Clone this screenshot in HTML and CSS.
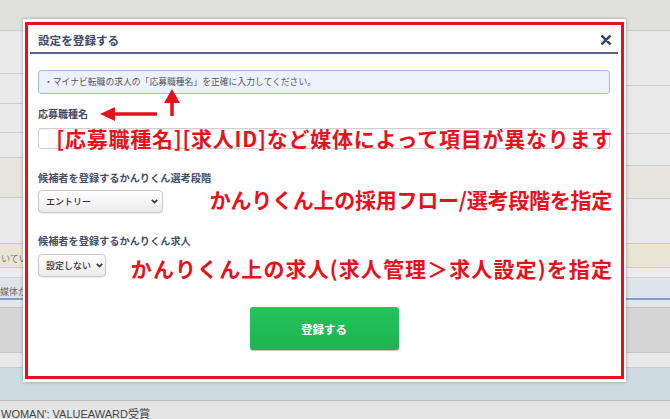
FILE: index.html
```html
<!DOCTYPE html>
<html lang="ja">
<head>
<meta charset="utf-8">
<title>設定を登録する</title>
<link rel="stylesheet" href="styles.css">
</head>
<body>
<div class="page">
  <div class="bg-top">
    <div class="col col-left">
      <div class="row r-top h30"></div>
      <div class="row h43"></div>
      <div class="row h30"></div>
      <div class="row h29"></div>
      <div class="row h25"></div>
      <div class="row beige h40"></div>
      <div class="row h46"></div>
    </div>
    <div class="col col-mid">
      <div class="row r-top h30"></div>
      <div class="row h213"></div>
    </div>
    <div class="col col-right">
      <div class="row r-top h30"></div>
      <div class="row h55"></div>
      <div class="row h48"></div>
      <div class="row h32"></div>
      <div class="row beige h33"></div>
      <div class="row h45"></div>
    </div>
  </div>
  <div class="band band-yellow"><span class="bg-text">いてい</span></div>
  <div class="band band-gap"></div>
  <div class="band band-blue"><span class="bg-text dim">媒体か</span></div>
  <div class="band band-light"></div>
  <div class="band band-gray"></div>
  <div class="band band-pale"></div>
  <div class="band band-bluegray"></div>
  <div class="band band-foot"><span class="foot-text">WOMAN': VALUEAWARD受賞</span></div>

  <div class="modal">
    <div class="frame">
      <div class="modal-header">
        <span class="modal-title">設定を登録する</span>
        <svg class="close" width="10" height="10" viewBox="0 0 10 10"><path d="M1.3 1.3 L8.7 8.7 M8.7 1.3 L1.3 8.7" stroke="#3b4568" stroke-width="2.6" stroke-linecap="round"/></svg>
      </div>
      <div class="modal-body">
        <div class="info">・マイナビ転職の求人の「応募職種名」を正確に入力してください。</div>
        <div class="label label-first">応募職種名</div>
        <div class="input"></div>
        <div class="label label-gap">候補者を登録するかんりくん選考段階</div>
        <div class="select select-wide"><span>エントリー</span><svg width="7" height="5" viewBox="0 0 7 5"><path d="M0.8 0.9 L3.5 3.6 L6.2 0.9" fill="none" stroke="#3a3a3a" stroke-width="1.7"/></svg></div>
        <div class="label label-gap2">候補者を登録するかんりくん求人</div>
        <div class="select select-narrow"><span>設定しない</span><svg width="7" height="5" viewBox="0 0 7 5"><path d="M0.8 0.9 L3.5 3.6 L6.2 0.9" fill="none" stroke="#3a3a3a" stroke-width="1.7"/></svg></div>
        <div class="submit">登録する</div>
      </div>
      <div class="anno anno-1">[応募職種名][求人ID]など媒体によって項目が異なります</div>
      <div class="anno anno-2">かんりくん上の採用フロー/選考段階を指定</div>
      <div class="anno anno-3">かんりくん上の求人(求人管理＞求人設定)を指定</div>
    </div>
  </div>

  <svg class="arrows" width="670" height="419" viewBox="0 0 670 419">
    <path d="M114 114 L157 114" stroke="#e8101c" stroke-width="3.5"/>
    <path d="M100 114 L115 107 L115 121 Z" fill="#e8101c"/>
    <path d="M172 101 L172 116" stroke="#e8101c" stroke-width="3.5"/>
    <path d="M172 89 L164 103 L180 103 Z" fill="#e8101c"/>
  </svg>
</div>
</body>
</html>
```

FILE: styles.css
```css
html, body {
  margin: 0;
  padding: 0;
}
body {
  width: 670px;
  height: 419px;
  overflow: hidden;
  font-family: "Noto Sans CJK JP", "Noto Sans", sans-serif;
}
.page {
  position: relative;
  width: 670px;
  height: 419px;
  overflow: hidden;
  background: #e4e4e4;
}
.bg-top {
  display: flex;
  height: 243px;
}
.col {
  display: flex;
  flex-direction: column;
}
.col-left { width: 23px; }
.col-mid { flex: 1; }
.col-right { width: 44px; }
.row {
  box-sizing: border-box;
  background: #e9e9e9;
  border-top: 1px solid #cdcdcd;
  flex: none;
}
.row.r-top {
  background: #e0e0dc;
  border-top: none;
}
.row.beige { background: #e6e4dc; }
.h25 { height: 25px; }
.h29 { height: 29px; }
.h30 { height: 30px; }
.h32 { height: 32px; }
.h33 { height: 33px; }
.h40 { height: 40px; }
.h43 { height: 43px; }
.h45 { height: 45px; }
.h46 { height: 46px; }
.h48 { height: 48px; }
.h55 { height: 55px; }
.h213 { height: 213px; }

.band {
  box-sizing: border-box;
  overflow: hidden;
  white-space: nowrap;
}
.band-yellow {
  height: 25px;
  background: #e9e6d5;
  border-top: 1px solid #e3d160;
  border-bottom: 1px solid #e3d160;
  line-height: 23px;
}
.band-gap { height: 9px; background: #ececec; }
.band-blue {
  height: 23px;
  background: #dfe3ea;
  border-top: 1px solid #c9d3e2;
  border-bottom: 2px solid #7b9fd5;
  line-height: 20px;
}
.band-light { height: 7px; background: #e6e6e6; }
.band-gray { height: 45px; background: #d6d6d6; border-top: 1px solid #c6c6c6; }
.band-pale { height: 16px; background: #e8e8e8; border-top: 1px solid #c4c4c4; border-bottom: 1px solid #c8c8c8; }
.band-bluegray { height: 32px; background: #cfdbe3; }
.band-foot {
  height: 19px;
  background: #e4e4e4;
  border-top: 1px solid #bdbdbd;
  line-height: 18px;
  padding-top: 1px;
}
.bg-text {
  font-size: 9px;
  color: #777;
  padding-left: 1px;
}
.bg-text.dim { color: #666; padding-left: 0; }
.foot-text {
  font-family: "Liberation Sans", "Noto Sans CJK JP", sans-serif;
  font-size: 11px;
  color: #444;
  padding-left: 1px;
}

.modal {
  position: absolute;
  left: 23px;
  top: 19px;
  width: 603px;
  height: 363px;
  box-sizing: border-box;
  padding: 3px 2px;
  background: #fff;
  box-shadow: 0 0 3px rgba(0, 0, 0, 0.35);
}
.frame {
  position: relative;
  height: 100%;
  box-sizing: border-box;
  border: 3px solid #e5121d;
}
.modal-header {
  box-sizing: border-box;
  height: 29px;
  margin: 0 3px 0 2px;
  padding: 2px 7px 0 8px;
  border-bottom: 2px solid #5c6790;
  display: flex;
  align-items: center;
  justify-content: space-between;
}
.modal-title {
  font-size: 11.6px;
  font-weight: bold;
  color: #3d4a6a;
}
.close { display: block; }
.modal-body {
  padding: 0 11px 0 10px;
  display: flex;
  flex-direction: column;
}
.info {
  margin-top: 16px;
  height: 24px;
  box-sizing: border-box;
  border: 1px solid #a0b9e2;
  border-radius: 3px;
  background: #edf2fa;
  font-size: 8.8px;
  line-height: 22px;
  color: #555;
  padding-left: 5px;
  white-space: nowrap;
}
.label {
  font-size: 10.2px;
  font-weight: bold;
  line-height: 14px;
  color: #444e6c;
  white-space: nowrap;
}
.label-first { margin-top: 13px; font-size: 10px; color: #3d4a6a; }
.label-gap { margin-top: 22px; }
.label-gap2 { margin-top: 21px; }
.input {
  margin-top: 7px;
  height: 21px;
  box-sizing: border-box;
  border: 1px solid #cfcfcf;
  border-radius: 3px;
  background: #fff;
  box-shadow: inset 0 1px 1px rgba(0, 0, 0, 0.05);
}
.select {
  box-sizing: border-box;
  height: 23px;
  border: 1px solid #c9c9c9;
  border-radius: 4px;
  background: linear-gradient(#ffffff, #ebebeb);
  box-shadow: 0 1px 1px rgba(0, 0, 0, 0.08);
  display: flex;
  align-items: center;
  justify-content: space-between;
  padding: 0 4px 0 7px;
  font-size: 9px;
  color: #333;
  white-space: nowrap;
}
.select span { font-weight: 500; }
.select svg { display: block; flex: none; margin-left: 5px; }
.select-wide { width: 125px; margin-top: 5px; }
.select-narrow { width: 68px; margin-top: 6px; }
.submit {
  margin: 30px auto 0;
  width: 149px;
  height: 43px;
  box-sizing: border-box;
  border-radius: 3px;
  background: linear-gradient(#23c35b, #1fb453);
  box-shadow: 0 1px 1px rgba(0, 0, 0, 0.25);
  color: #fff;
  font-size: 11.5px;
  font-weight: bold;
  display: flex;
  align-items: center;
  justify-content: center;
}
.anno {
  position: absolute;
  font-size: 21px;
  line-height: 21px;
  font-weight: bold;
  color: #e8101c;
  white-space: nowrap;
  text-shadow: 0 0 1px #fff;
}
.anno-1 { top: 103px; right: 8px; letter-spacing: 0.75px; }
.anno-2 { top: 164px; right: 9px; letter-spacing: -0.25px; }
.anno-3 { top: 233px; right: 8px; letter-spacing: 1.1px; }
.arrows {
  position: absolute;
  left: 0;
  top: 0;
  pointer-events: none;
}
```
